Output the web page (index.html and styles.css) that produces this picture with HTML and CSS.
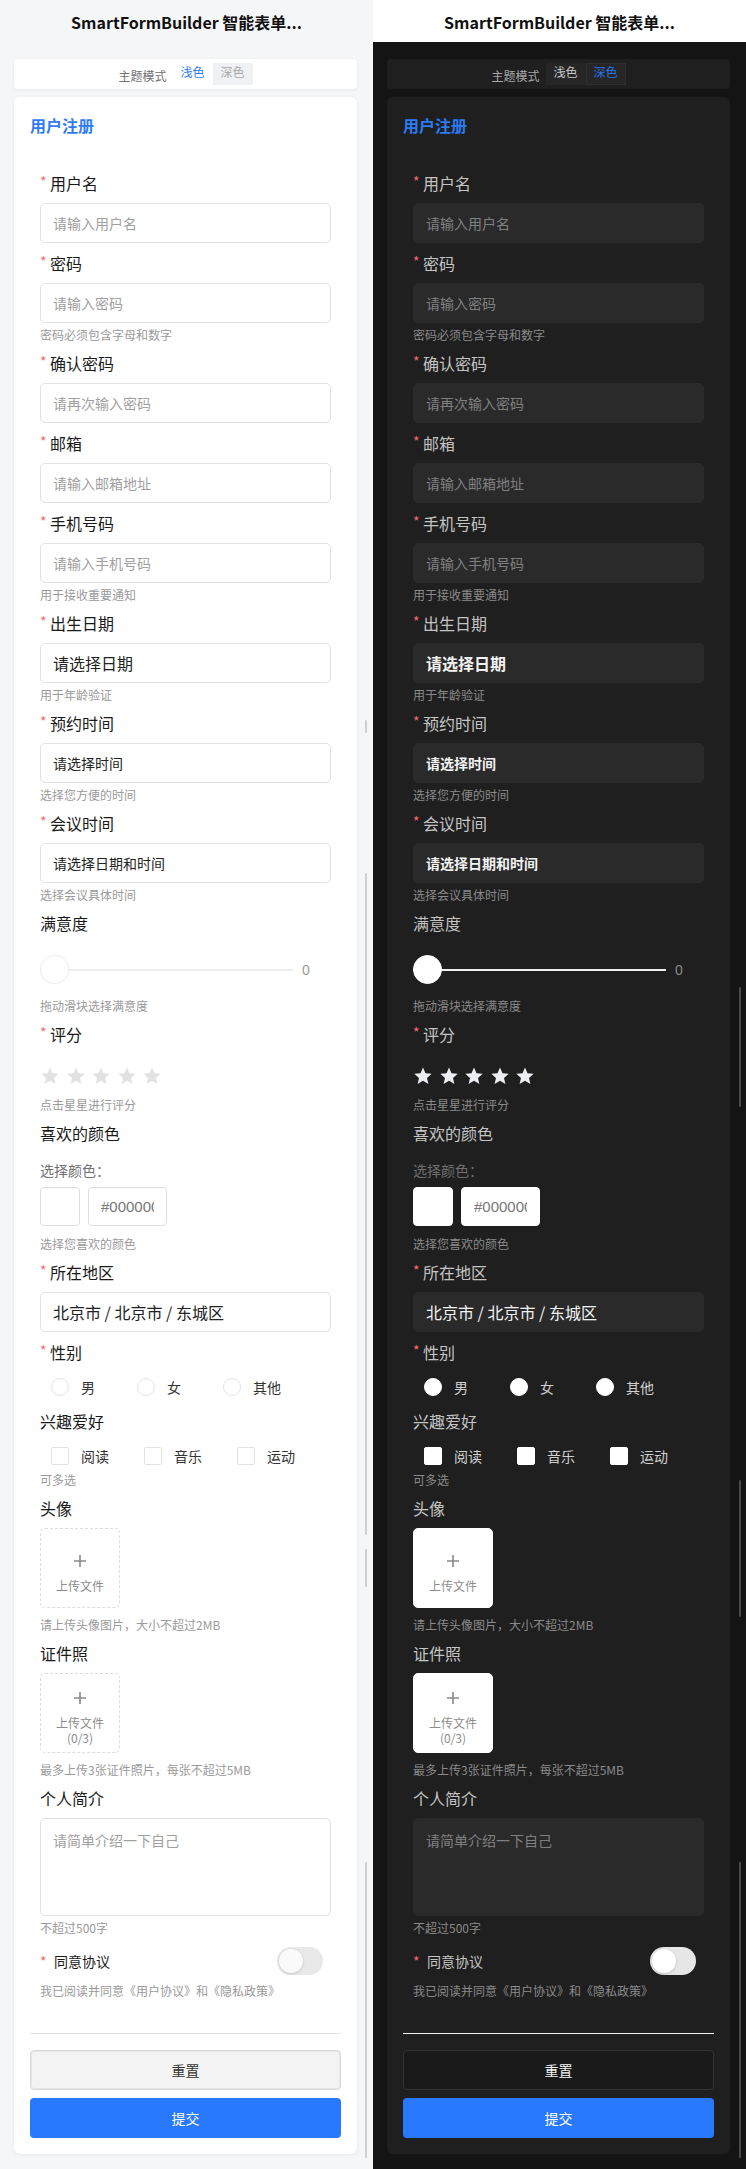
FILE: index.html
```html
<!DOCTYPE html>
<html lang="zh-CN">
<head>
<meta charset="utf-8">
<title>SmartFormBuilder</title>
<link rel="stylesheet" href="styles.css">
</head>
<body>
<div class="page">
  <section class="col light">
    <header class="cap">SmartFormBuilder 智能表单...</header>
    <div class="panel">
      <div class="theme-card">
        <span class="tlabel">主题模式</span>
        <div class="seg"><span class="seg-item on">浅色</span><span class="seg-item">深色</span></div>
      </div>
      <div class="card">
        <h2 class="ftitle">用户注册</h2>
        <div class="item"><div class="label"><span class="req">*</span>用户名</div><div class="input ph">请输入用户名</div></div>
        <div class="item"><div class="label"><span class="req">*</span>密码</div><div class="input ph">请输入密码</div><div class="hint">密码必须包含字母和数字</div></div>
        <div class="item"><div class="label"><span class="req">*</span>确认密码</div><div class="input ph">请再次输入密码</div></div>
        <div class="item"><div class="label"><span class="req">*</span>邮箱</div><div class="input ph">请输入邮箱地址</div></div>
        <div class="item"><div class="label"><span class="req">*</span>手机号码</div><div class="input ph">请输入手机号码</div><div class="hint">用于接收重要通知</div></div>
        <div class="item"><div class="label"><span class="req">*</span>出生日期</div><div class="input val big">请选择日期</div><div class="hint">用于年龄验证</div></div>
        <div class="item"><div class="label"><span class="req">*</span>预约时间</div><div class="input val">请选择时间</div><div class="hint">选择您方便的时间</div></div>
        <div class="item"><div class="label"><span class="req">*</span>会议时间</div><div class="input val">请选择日期和时间</div><div class="hint">选择会议具体时间</div></div>
        <div class="item"><div class="label">满意度</div>
          <div class="slider"><div class="track"><span class="thumb"></span></div><span class="sval">0</span></div>
          <div class="hint">拖动滑块选择满意度</div></div>
        <div class="item"><div class="label"><span class="req">*</span>评分</div>
          <div class="stars">
            <svg viewBox="0 0 24 24"><path d="M12 1.8l3 7 7.4.6-5.6 4.9 1.7 7.3L12 17.7l-6.5 3.9 1.7-7.3-5.6-4.9 7.4-.6z"/></svg>
            <svg viewBox="0 0 24 24"><path d="M12 1.8l3 7 7.4.6-5.6 4.9 1.7 7.3L12 17.7l-6.5 3.9 1.7-7.3-5.6-4.9 7.4-.6z"/></svg>
            <svg viewBox="0 0 24 24"><path d="M12 1.8l3 7 7.4.6-5.6 4.9 1.7 7.3L12 17.7l-6.5 3.9 1.7-7.3-5.6-4.9 7.4-.6z"/></svg>
            <svg viewBox="0 0 24 24"><path d="M12 1.8l3 7 7.4.6-5.6 4.9 1.7 7.3L12 17.7l-6.5 3.9 1.7-7.3-5.6-4.9 7.4-.6z"/></svg>
            <svg viewBox="0 0 24 24"><path d="M12 1.8l3 7 7.4.6-5.6 4.9 1.7 7.3L12 17.7l-6.5 3.9 1.7-7.3-5.6-4.9 7.4-.6z"/></svg>
          </div>
          <div class="hint">点击星星进行评分</div></div>
        <div class="item"><div class="label">喜欢的颜色</div>
          <div class="color">
            <div class="clabel">选择颜色：</div>
            <div class="crow"><span class="swatch"></span><input class="hex" type="text" value="#000000" readonly></div>
          </div>
          <div class="hint">选择您喜欢的颜色</div></div>
        <div class="item"><div class="label"><span class="req">*</span>所在地区</div><div class="input val big">北京市 / 北京市 / 东城区</div></div>
        <div class="item"><div class="label"><span class="req">*</span>性别</div>
          <div class="radios">
            <span class="ropt"><span class="radio"></span>男</span>
            <span class="ropt"><span class="radio"></span>女</span>
            <span class="ropt"><span class="radio"></span>其他</span>
          </div></div>
        <div class="item"><div class="label">兴趣爱好</div>
          <div class="checks">
            <span class="copt"><span class="cbox"></span>阅读</span>
            <span class="copt"><span class="cbox"></span>音乐</span>
            <span class="copt"><span class="cbox"></span>运动</span>
          </div>
          <div class="hint">可多选</div></div>
        <div class="item"><div class="label">头像</div>
          <div class="upload"><svg class="plus" viewBox="0 0 14 14"><path d="M7 1v12M1 7h12"/></svg><span class="utext">上传文件</span></div>
          <div class="hint">请上传头像图片，大小不超过2MB</div></div>
        <div class="item"><div class="label">证件照</div>
          <div class="upload"><svg class="plus" viewBox="0 0 14 14"><path d="M7 1v12M1 7h12"/></svg><span class="utext">上传文件<br>(0/3)</span></div>
          <div class="hint">最多上传3张证件照片，每张不超过5MB</div></div>
        <div class="item"><div class="label">个人简介</div>
          <div class="textarea ph">请简单介绍一下自己</div>
          <div class="hint">不超过500字</div></div>
        <div class="item"><div class="agree"><span class="req">*</span><span class="atext">同意协议</span><span class="switch"><span class="knob"></span></span></div>
          <div class="hint h5">我已阅读并同意《用户协议》和《隐私政策》</div></div>
        <div class="footer">
          <div class="divider"></div>
          <button class="btn reset" type="button">重置</button>
          <button class="btn submit" type="button">提交</button>
        </div>
      </div>
    </div>
    <span class="sb s1"></span><span class="sb s2"></span><span class="sb s3"></span><span class="sb s4"></span>
  </section>

  <section class="col dark">
    <header class="cap">SmartFormBuilder 智能表单...</header>
    <div class="panel">
      <div class="theme-card">
        <span class="tlabel">主题模式</span>
        <div class="seg"><span class="seg-item">浅色</span><span class="seg-item on">深色</span></div>
      </div>
      <div class="card">
        <h2 class="ftitle">用户注册</h2>
        <div class="item"><div class="label"><span class="req">*</span>用户名</div><div class="input ph">请输入用户名</div></div>
        <div class="item"><div class="label"><span class="req">*</span>密码</div><div class="input ph">请输入密码</div><div class="hint">密码必须包含字母和数字</div></div>
        <div class="item"><div class="label"><span class="req">*</span>确认密码</div><div class="input ph">请再次输入密码</div></div>
        <div class="item"><div class="label"><span class="req">*</span>邮箱</div><div class="input ph">请输入邮箱地址</div></div>
        <div class="item"><div class="label"><span class="req">*</span>手机号码</div><div class="input ph">请输入手机号码</div><div class="hint">用于接收重要通知</div></div>
        <div class="item"><div class="label"><span class="req">*</span>出生日期</div><div class="input val big">请选择日期</div><div class="hint">用于年龄验证</div></div>
        <div class="item"><div class="label"><span class="req">*</span>预约时间</div><div class="input val">请选择时间</div><div class="hint">选择您方便的时间</div></div>
        <div class="item"><div class="label"><span class="req">*</span>会议时间</div><div class="input val">请选择日期和时间</div><div class="hint">选择会议具体时间</div></div>
        <div class="item"><div class="label">满意度</div>
          <div class="slider"><div class="track"><span class="thumb"></span></div><span class="sval">0</span></div>
          <div class="hint">拖动滑块选择满意度</div></div>
        <div class="item"><div class="label"><span class="req">*</span>评分</div>
          <div class="stars">
            <svg viewBox="0 0 24 24"><path d="M12 1.8l3 7 7.4.6-5.6 4.9 1.7 7.3L12 17.7l-6.5 3.9 1.7-7.3-5.6-4.9 7.4-.6z"/></svg>
            <svg viewBox="0 0 24 24"><path d="M12 1.8l3 7 7.4.6-5.6 4.9 1.7 7.3L12 17.7l-6.5 3.9 1.7-7.3-5.6-4.9 7.4-.6z"/></svg>
            <svg viewBox="0 0 24 24"><path d="M12 1.8l3 7 7.4.6-5.6 4.9 1.7 7.3L12 17.7l-6.5 3.9 1.7-7.3-5.6-4.9 7.4-.6z"/></svg>
            <svg viewBox="0 0 24 24"><path d="M12 1.8l3 7 7.4.6-5.6 4.9 1.7 7.3L12 17.7l-6.5 3.9 1.7-7.3-5.6-4.9 7.4-.6z"/></svg>
            <svg viewBox="0 0 24 24"><path d="M12 1.8l3 7 7.4.6-5.6 4.9 1.7 7.3L12 17.7l-6.5 3.9 1.7-7.3-5.6-4.9 7.4-.6z"/></svg>
          </div>
          <div class="hint">点击星星进行评分</div></div>
        <div class="item"><div class="label">喜欢的颜色</div>
          <div class="color">
            <div class="clabel">选择颜色：</div>
            <div class="crow"><span class="swatch"></span><input class="hex" type="text" value="#000000" readonly></div>
          </div>
          <div class="hint">选择您喜欢的颜色</div></div>
        <div class="item"><div class="label"><span class="req">*</span>所在地区</div><div class="input val big plain">北京市 / 北京市 / 东城区</div></div>
        <div class="item"><div class="label"><span class="req">*</span>性别</div>
          <div class="radios">
            <span class="ropt"><span class="radio"></span>男</span>
            <span class="ropt"><span class="radio"></span>女</span>
            <span class="ropt"><span class="radio"></span>其他</span>
          </div></div>
        <div class="item"><div class="label">兴趣爱好</div>
          <div class="checks">
            <span class="copt"><span class="cbox"></span>阅读</span>
            <span class="copt"><span class="cbox"></span>音乐</span>
            <span class="copt"><span class="cbox"></span>运动</span>
          </div>
          <div class="hint">可多选</div></div>
        <div class="item"><div class="label">头像</div>
          <div class="upload"><svg class="plus" viewBox="0 0 14 14"><path d="M7 1v12M1 7h12"/></svg><span class="utext">上传文件</span></div>
          <div class="hint">请上传头像图片，大小不超过2MB</div></div>
        <div class="item"><div class="label">证件照</div>
          <div class="upload"><svg class="plus" viewBox="0 0 14 14"><path d="M7 1v12M1 7h12"/></svg><span class="utext">上传文件<br>(0/3)</span></div>
          <div class="hint">最多上传3张证件照片，每张不超过5MB</div></div>
        <div class="item"><div class="label">个人简介</div>
          <div class="textarea ph">请简单介绍一下自己</div>
          <div class="hint">不超过500字</div></div>
        <div class="item"><div class="agree"><span class="req">*</span><span class="atext">同意协议</span><span class="switch"><span class="knob"></span></span></div>
          <div class="hint h5">我已阅读并同意《用户协议》和《隐私政策》</div></div>
        <div class="footer">
          <div class="divider"></div>
          <button class="btn reset" type="button">重置</button>
          <button class="btn submit" type="button">提交</button>
        </div>
      </div>
    </div>
    <span class="sb d1"></span><span class="sb d2"></span><span class="sb d3"></span>
  </section>
</div>
</body>
</html>
```

FILE: styles.css
```css
* { box-sizing: border-box; }
html, body { margin: 0; padding: 0; }
body {
  font-family: "Noto Sans CJK SC", "Noto Sans", "Liberation Sans", sans-serif;
  background: #ffffff;
}
.page {
  display: grid;
  grid-template-columns: 373px 373px;
  width: 746px;
}

/* theme variables */
.col.light {
  --bg: #f5f6f8; --capbg: #f5f6f8; --card: #ffffff; --label: #1a1a1a; --hint: #9a9a9a;
  --inbg: #ffffff; --inbd: #e0e2e6; --ph: #a0a0a0; --val: #222222; --blue: #2f7cf6;
  --tl: #707070; --segbg: #f0f1f4; --segon: #ffffff; --segoff: #a8a8a8; --segonc: #2f7cf6; --segbd: transparent;
  --track: #ececec; --thumb: #ffffff; --thumbbd: #eeeeee; --star: #e2e2e2;
  --ctrl: #ffffff; --ctrlbd: #dedede; --opt: #333333; --upbg: #ffffff; --upbd: #dddddd;
  --sw: #e8e8e8; --divider: #e3e3e3; --rbg: #f3f3f3; --rbd: #dadada; --rc: #333333;
  --shadow: 0 1px 4px rgba(0,0,0,0.06); --sb: #cfcfcf; --hex: #777777;
}
.col.dark {
  --bg: #141414; --capbg: #ffffff; --card: #1f1f1f; --label: #c4c4c4; --hint: #8a8a8a;
  --inbg: #2a2a2a; --inbd: #2a2a2a; --ph: #808080; --val: #f2f2f2; --blue: #2a7cf4;
  --tl: #a8a8a8; --segbg: #141414; --segon: #1a1a1a; --segoff: #c8c8c8; --segonc: #2a73e8; --segbd: #2e2e2e;
  --track: #f0f0f0; --thumb: #ffffff; --thumbbd: #ffffff; --star: #eceef3;
  --ctrl: #ffffff; --ctrlbd: #ffffff; --opt: #d0d0d0; --upbg: #ffffff; --upbd: #ffffff;
  --sw: #e6e6e6; --divider: #f0f0f0; --rbg: #1a1a1a; --rbd: #333333; --rc: #f2f2f2;
  --shadow: none; --sb: #4a4a4a; --hex: #777777;
}

.col {
  position: relative;
  background: var(--bg);
}
.cap {
  height: 42px;
  line-height: 44px;
  text-align: center;
  font-size: 16px;
  font-weight: 700;
  color: #111;
  background: var(--capbg);
}
.panel {
  padding: 17px 16px 15px 14px;
}

/* theme toggle */
.theme-card {
  height: 30px;
  background: var(--card);
  border-radius: 4px;
  box-shadow: var(--shadow);
  display: flex;
  justify-content: center;
  align-items: center;
  gap: 6px;
  margin-bottom: 8px;
}
.tlabel {
  font-size: 12px;
  line-height: 16px;
  color: var(--tl);
  margin-top: 4px;
}
.seg {
  display: flex;
  height: 22px;
  background: var(--segbg);
  border-radius: 2px;
}
.seg-item {
  width: 40px;
  height: 22px;
  text-align: center;
  font-size: 12px;
  line-height: 18px;
  color: var(--segoff);
}
.col.dark .seg-item { background: #262626; }
.seg-item.on {
  background: var(--segon);
  color: var(--segonc);
  border: 1px solid var(--segbd);
  line-height: 16px;
}
.col.light .seg-item.on { border-color: transparent; }

/* card */
.card {
  background: var(--card);
  border-radius: 6px;
  box-shadow: var(--shadow);
  padding: 16px;
}
.ftitle {
  margin: 0 0 34px;
  font-size: 16px;
  line-height: 24px;
  font-weight: 700;
  color: var(--blue);
}
.item {
  padding: 0 10px;
  margin-bottom: 8px;
}
.label {
  height: 24px;
  line-height: 24px;
  font-size: 16px;
  color: var(--label);
  margin-bottom: 8px;
  display: flex;
  align-items: center;
}
.req {
  color: #f56c6c;
  font-size: 14px;
  width: 7px;
  margin-right: 3px;
  line-height: 14px;
  align-self: flex-start;
  margin-top: 3px;
}
.input {
  height: 40px;
  border: 1px solid var(--inbd);
  background: var(--inbg);
  border-radius: 5px;
  padding: 0 12px;
  font-size: 14px;
  line-height: 38px;
  white-space: nowrap;
  overflow: hidden;
}
.ph { color: var(--ph); }
.val { color: var(--val); }
.val.big { font-size: 16px; }
.col.dark .val { font-weight: 700; }
.col.dark .val.plain { font-weight: 400; }
.hint {
  margin-top: 4px;
  font-size: 12px;
  line-height: 16px;
  height: 16px;
  color: var(--hint);
  white-space: nowrap;
}
.hint.h5 { margin-top: 5px; }

/* slider */
.slider {
  height: 51px;
  display: flex;
  align-items: center;
  padding-top: 2px;
}
.track {
  position: relative;
  width: 253px;
  height: 2px;
  background: var(--track);
}
.thumb {
  position: absolute;
  left: 0;
  top: -14px;
  width: 29px;
  height: 29px;
  border-radius: 50%;
  background: var(--thumb);
  border: 1px solid var(--thumbbd);
}
.col.light .thumb { box-shadow: 0 0 2px rgba(0,0,0,0.04); }
.sval {
  margin-left: 9px;
  font-size: 14px;
  color: var(--hint);
  font-family: "Liberation Sans", sans-serif;
}

/* stars */
.stars {
  height: 39px;
  padding-top: 12px;
  display: flex;
  gap: 5.5px;
}
.stars svg {
  width: 20px;
  height: 20px;
  fill: var(--star);
}

/* color */
.color {
  padding-top: 6px;
  height: 79px;
}
.clabel {
  font-size: 14px;
  line-height: 22px;
  color: var(--tl);
  margin-bottom: 6px;
}
.col.dark .clabel { color: #6e6e6e; }
.crow {
  display: flex;
  gap: 8px;
}
.swatch {
  width: 40px;
  height: 39px;
  border: 1px solid var(--ctrlbd);
  background: var(--ctrl);
  border-radius: 4px;
}
.hex {
  width: 79px;
  height: 39px;
  border: 1px solid var(--ctrlbd);
  background: var(--ctrl);
  border-radius: 4px;
  padding: 0 12px;
  font-size: 15px;
  font-family: "Liberation Sans", sans-serif;
  color: var(--hex);
  outline: none;
}

/* radios */
.radios {
  height: 29px;
  display: flex;
  align-items: center;
  padding-left: 11px;
}
.ropt {
  width: 86px;
  display: flex;
  align-items: center;
  gap: 12px;
  font-size: 14px;
  color: var(--opt);
}
.radio {
  width: 18px;
  height: 18px;
  border-radius: 50%;
  background: var(--ctrl);
  border: 1px solid var(--ctrlbd);
}
.col.light .radio { border-color: #e4e4e4; }

/* checkboxes */
.checks {
  height: 27px;
  display: flex;
  align-items: center;
  padding-left: 11px;
  padding-top: 3px;
}
.copt {
  width: 93px;
  display: flex;
  align-items: center;
  gap: 12px;
  font-size: 14px;
  color: var(--opt);
}
.cbox {
  width: 18px;
  height: 18px;
  border-radius: 2px;
  background: var(--ctrl);
  border: 1px solid var(--ctrlbd);
}
.col.light .cbox { border-color: #e2e2e2; }

/* upload */
.upload {
  width: 80px;
  height: 80px;
  margin-bottom: 9px;
  border: 1px dashed var(--upbd);
  background: var(--upbg);
  border-radius: 5px;
  padding-top: 10px;
  display: flex;
  flex-direction: column;
  align-items: center;
  justify-content: center;
  gap: 10px;
}
.col.dark .upload { border-style: solid; }
.plus {
  width: 14px;
  height: 14px;
  stroke: #8a8a8a;
  stroke-width: 1.6;
  fill: none;
}
.utext {
  font-size: 12px;
  line-height: 15px;
  color: #8c8c8c;
  text-align: center;
}

/* textarea */
.textarea {
  height: 98px;
  border: 1px solid var(--inbd);
  background: var(--inbg);
  border-radius: 5px;
  padding: 11px 12px;
  font-size: 14px;
  line-height: 20px;
}

/* agreement */
.agree {
  height: 34px;
  display: flex;
  align-items: center;
}
.agree .req {
  margin-right: 7px;
  align-self: center;
  margin-top: 0;
}
.atext {
  font-size: 14px;
  color: var(--label);
}
.switch {
  position: relative;
  margin-left: auto;
  margin-right: 8px;
  width: 46px;
  height: 28px;
  border-radius: 14px;
  background: var(--sw);
}
.knob {
  position: absolute;
  left: 2px;
  top: 2px;
  width: 24px;
  height: 24px;
  border-radius: 50%;
  background: #ffffff;
  box-shadow: 0 1px 3px rgba(0,0,0,0.15);
}
.col.light .knob { background: #fafafa; }

/* footer */
.footer {
  margin-top: 34px;
  display: flex;
  flex-direction: column;
}
.divider {
  height: 1px;
  background: var(--divider);
  margin-bottom: 16px;
}
.btn {
  height: 40px;
  border-radius: 4px;
  font-family: inherit;
  font-size: 14px;
  cursor: pointer;
}
.reset {
  background: var(--rbg);
  border: 1px solid var(--rbd);
  color: var(--rc);
  margin-bottom: 8px;
}
.col.light .reset { box-shadow: inset 0 0 0 1px #e6e6e6; }
.submit {
  background: #2979ff;
  border: none;
  color: #ffffff;
}

/* scrollbar fragments */
.sb {
  position: absolute;
  width: 2px;
  background: var(--sb);
  border-radius: 1px;
}
.s1 { left: 365px; top: 720px; height: 13px; }
.s2 { left: 365px; top: 873px; height: 662px; }
.s3 { left: 365px; top: 1549px; height: 38px; }
.s4 { left: 365px; top: 1862px; height: 296px; }
.d1 { left: 366px; top: 987px; height: 120px; }
.d2 { left: 366px; top: 1480px; height: 137px; }
.d3 { left: 366px; top: 1862px; height: 296px; }
```
